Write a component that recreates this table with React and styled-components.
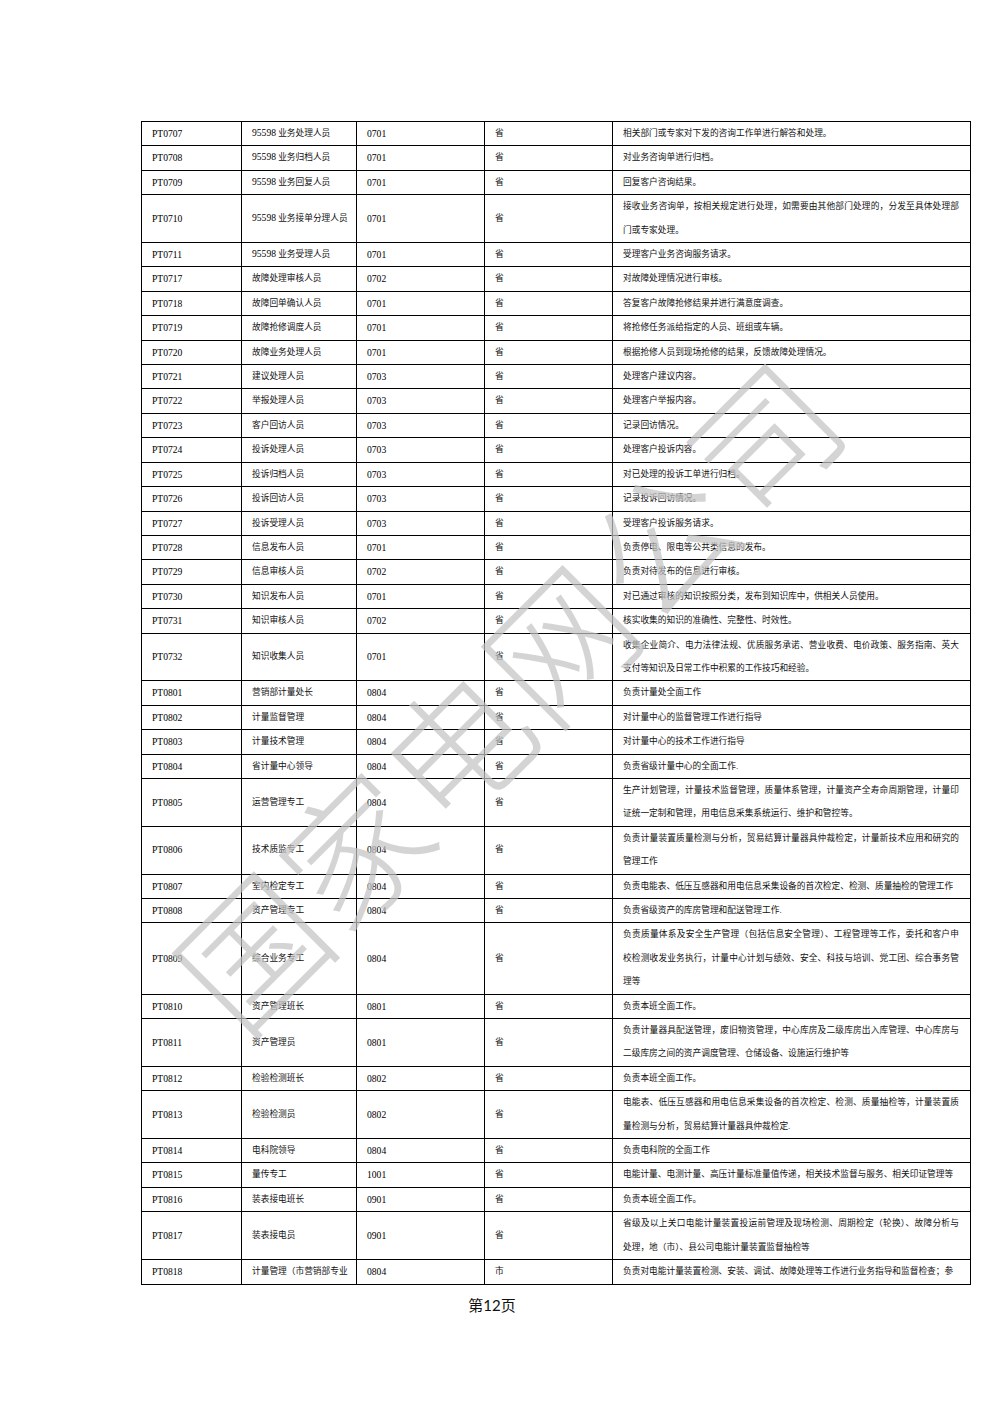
import React from 'react';
import styled, { createGlobalStyle } from 'styled-components';

const Global = createGlobalStyle`
  html, body { margin: 0; padding: 0; background: #fff; }
  body { font-family: "Liberation Serif", "Noto Sans CJK SC", serif; }
`;

const Page = styled.div`
  position: relative;
  width: 1000px;
  height: 1415px;
  overflow: hidden;
  background: #fff;
  padding-top: 121px;
  box-sizing: border-box;
`;

const Table = styled.table`
  margin-left: 141px;
  width: 829px;
  border-collapse: collapse;
  table-layout: fixed;
  border: 1.5px solid #000;
  font-family: "Liberation Serif", "Noto Sans CJK SC", serif;
  font-size: 8.7px;
  color: #111;
`;

const Cell = styled.td`
  border: 1px solid #000;
  padding: 0 ${(p) => (p.$wide ? '11px' : '10px')} 0 10px;
  line-height: 23.4px;
  height: 23.4px;
  box-sizing: border-box;
  vertical-align: ${(p) => (p.$wide ? 'top' : 'middle')};
  white-space: nowrap;
  overflow: hidden;
  font-size: ${(p) => (p.$latin ? '9.6px' : '8.7px')};
  color: ${(p) => (p.$latin ? '#000' : '#111')};
`;

const Line = styled.span`
  display: block;
  text-align: left;
  text-align-last: ${(p) => (p.$justify ? 'justify' : 'left')};
`;

const Digits = styled.span`
  font-size: 9.6px;
  line-height: 1;
  color: #000;
`;

const Footer = styled.div`
  margin-top: 10px;
  padding-right: 16px;
  text-align: center;
  font-family: "Liberation Serif", "Noto Sans CJK SC", serif;
  font-size: 15px;
  line-height: 20px;
  color: #111;
`;

const Num = styled.span`
  font-family: Lato, "Open Sans", sans-serif;
`;

const Watermark = styled.div`
  position: absolute;
  left: 505px;
  top: 690px;
  transform: translate(-50%, -50%) rotate(-45deg);
  font-family: "Noto Sans CJK SC", sans-serif;
  font-size: 142px;
  font-weight: 300;
  line-height: 1;
  letter-spacing: 3px;
  white-space: nowrap;
  color: rgba(195, 195, 195, 0.72);
  pointer-events: none;
`;

const rows = [
  ['PT0707', '95598 业务处理人员', '0701', '省', ['相关部门或专家对下发的咨询工作单进行解答和处理。']],
  ['PT0708', '95598 业务归档人员', '0701', '省', ['对业务咨询单进行归档。']],
  ['PT0709', '95598 业务回复人员', '0701', '省', ['回复客户咨询结果。']],
  ['PT0710', '95598 业务接单分理人员', '0701', '省', ['接收业务咨询单，按相关规定进行处理，如需要由其他部门处理的，分发至具体处理部', '门或专家处理。']],
  ['PT0711', '95598 业务受理人员', '0701', '省', ['受理客户业务咨询服务请求。']],
  ['PT0717', '故障处理审核人员', '0702', '省', ['对故障处理情况进行审核。']],
  ['PT0718', '故障回单确认人员', '0701', '省', ['答复客户故障抢修结果并进行满意度调查。']],
  ['PT0719', '故障抢修调度人员', '0701', '省', ['将抢修任务派给指定的人员、班组或车辆。']],
  ['PT0720', '故障业务处理人员', '0701', '省', ['根据抢修人员到现场抢修的结果，反馈故障处理情况。']],
  ['PT0721', '建议处理人员', '0703', '省', ['处理客户建议内容。']],
  ['PT0722', '举报处理人员', '0703', '省', ['处理客户举报内容。']],
  ['PT0723', '客户回访人员', '0703', '省', ['记录回访情况。']],
  ['PT0724', '投诉处理人员', '0703', '省', ['处理客户投诉内容。']],
  ['PT0725', '投诉归档人员', '0703', '省', ['对已处理的投诉工单进行归档。']],
  ['PT0726', '投诉回访人员', '0703', '省', ['记录投诉回访情况。']],
  ['PT0727', '投诉受理人员', '0703', '省', ['受理客户投诉服务请求。']],
  ['PT0728', '信息发布人员', '0701', '省', ['负责停电、限电等公共类信息的发布。']],
  ['PT0729', '信息审核人员', '0702', '省', ['负责对待发布的信息进行审核。']],
  ['PT0730', '知识发布人员', '0701', '省', ['对已通过审核的知识按照分类，发布到知识库中，供相关人员使用。']],
  ['PT0731', '知识审核人员', '0702', '省', ['核实收集的知识的准确性、完整性、时效性。']],
  ['PT0732', '知识收集人员', '0701', '省', ['收集企业简介、电力法律法规、优质服务承诺、营业收费、电价政策、服务指南、英大', '支付等知识及日常工作中积累的工作技巧和经验。']],
  ['PT0801', '营销部计量处长', '0804', '省', ['负责计量处全面工作']],
  ['PT0802', '计量监督管理', '0804', '省', ['对计量中心的监督管理工作进行指导']],
  ['PT0803', '计量技术管理', '0804', '省', ['对计量中心的技术工作进行指导']],
  ['PT0804', '省计量中心领导', '0804', '省', ['负责省级计量中心的全面工作.']],
  ['PT0805', '运营管理专工', '0804', '省', ['生产计划管理，计量技术监督管理，质量体系管理，计量资产全寿命周期管理，计量印', '证统一定制和管理，用电信息采集系统运行、维护和管控等。']],
  ['PT0806', '技术质监专工', '0804', '省', ['负责计量装置质量检测与分析，贸易结算计量器具仲裁检定，计量新技术应用和研究的', '管理工作']],
  ['PT0807', '室内检定专工', '0804', '省', ['负责电能表、低压互感器和用电信息采集设备的首次检定、检测、质量抽检的管理工作']],
  ['PT0808', '资产管理专工', '0804', '省', ['负责省级资产的库房管理和配送管理工作.']],
  ['PT0809', '综合业务专工', '0804', '省', ['负责质量体系及安全生产管理（包括信息安全管理）、工程管理等工作，委托和客户申', '校检测收发业务执行，计量中心计划与绩效、安全、科技与培训、党工团、综合事务管', '理等']],
  ['PT0810', '资产管理班长', '0801', '省', ['负责本班全面工作。']],
  ['PT0811', '资产管理员', '0801', '省', ['负责计量器具配送管理，废旧物资管理，中心库房及二级库房出入库管理、中心库房与', '二级库房之间的资产调度管理、仓储设备、设施运行维护等']],
  ['PT0812', '检验检测班长', '0802', '省', ['负责本班全面工作。']],
  ['PT0813', '检验检测员', '0802', '省', ['电能表、低压互感器和用电信息采集设备的首次检定、检测、质量抽检等，计量装置质', '量检测与分析，贸易结算计量器具仲裁检定.']],
  ['PT0814', '电科院领导', '0804', '省', ['负责电科院的全面工作']],
  ['PT0815', '量传专工', '1001', '省', ['电能计量、电测计量、高压计量标准量值传递，相关技术监督与服务、相关印证管理等']],
  ['PT0816', '装表接电班长', '0901', '省', ['负责本班全面工作。']],
  ['PT0817', '装表接电员', '0901', '省', ['省级及以上关口电能计量装置投运前管理及现场检测、周期检定（轮换）、故障分析与', '处理，地（市）、县公司电能计量装置监督抽检等']],
  ['PT0818', '计量管理（市营销部专业', '0804', '市', ['负责对电能计量装置检测、安装、调试、故障处理等工作进行业务指导和监督检查；参']],
];

function Name({ text }) {
  const m = text.match(/^(\d+)( .*)$/);
  if (!m) return text;
  return (
    <>
      <Digits>{m[1]}</Digits>
      {m[2]}
    </>
  );
}

export default function App() {
  return (
    <Page>
      <Global />
      <Table>
        <colgroup>
          <col style={{ width: '100px' }} />
          <col style={{ width: '115px' }} />
          <col style={{ width: '128px' }} />
          <col style={{ width: '128px' }} />
          <col style={{ width: '358px' }} />
        </colgroup>
        <tbody>
          {rows.map(([code, name, org, level, desc]) => (
            <tr key={code}>
              <Cell $latin>{code}</Cell>
              <Cell>
                <Name text={name} />
              </Cell>
              <Cell $latin>{org}</Cell>
              <Cell>{level}</Cell>
              <Cell $wide>
                {desc.map((line, i) => (
                  <Line key={i} $justify={i < desc.length - 1}>
                    {line}
                  </Line>
                ))}
              </Cell>
            </tr>
          ))}
        </tbody>
      </Table>
      <Footer>
        第<Num>12</Num>页
      </Footer>
      <Watermark>国家电网公司</Watermark>
    </Page>
  );
}
